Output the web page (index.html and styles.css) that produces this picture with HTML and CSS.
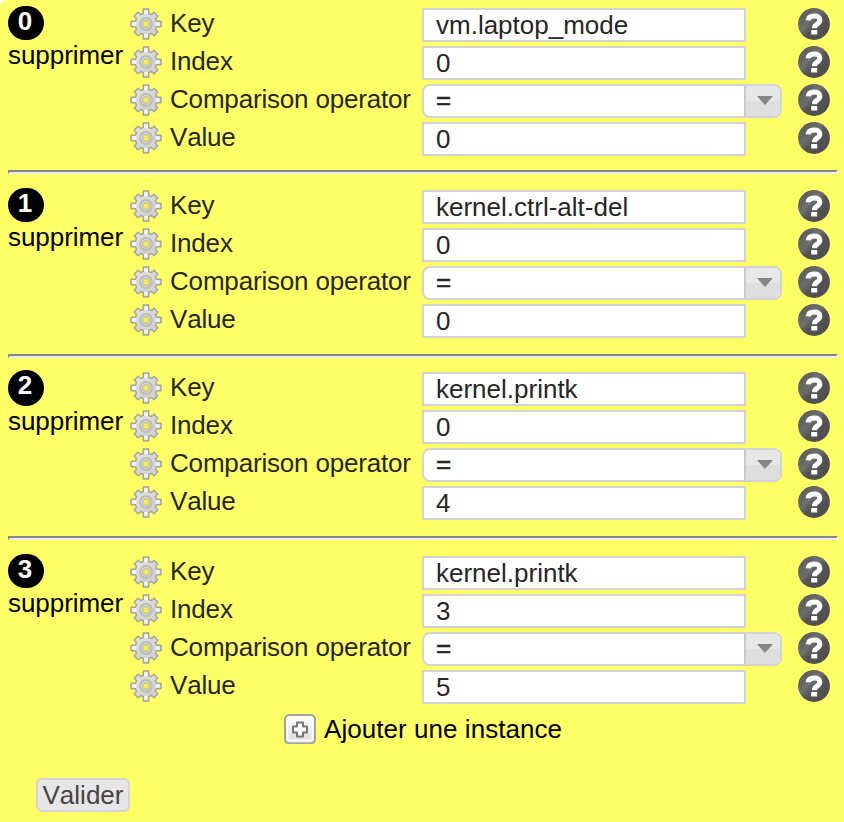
FILE: index.html
```
<!DOCTYPE html>
<html lang="fr">
<head>
<meta charset="utf-8">
<title>Instances</title>
<link rel="stylesheet" href="styles.css">
</head>
<body>
<svg class="defs" width="0" height="0" aria-hidden="true">
  <defs>
    <linearGradient id="gearFill" x1="0" y1="0" x2="1" y2="1"><stop offset="0" stop-color="#e6e6e6"/><stop offset="1" stop-color="#cacaca"/></linearGradient>
    <linearGradient id="helpFill" x1="0" y1="0" x2="1" y2="1"><stop offset="0" stop-color="#555"/><stop offset=".4" stop-color="#6e6e6e"/><stop offset=".55" stop-color="#545454"/><stop offset="1" stop-color="#4c4c4c"/></linearGradient>
    <linearGradient id="addFill" x1="0" y1="0" x2="0" y2="1"><stop offset="0" stop-color="#fff"/><stop offset="1" stop-color="#dedede"/></linearGradient>
  </defs>
  <symbol id="gear" viewBox="0 0 32 32">
    <path fill="url(#gearFill)" stroke="#a5a5a0" stroke-width="1.500" stroke-linejoin="round" d="M13.300 1h5.400v4.500l2.800 1L24 4.300 27.700 8 25.500 10.500l1 2.800H31v5.400h-4.500l-1 2.800L27.700 24 24 27.700l-2.500-2.200-2.800 1V31h-5.400v-4.500l-2.800-1L8 27.700 4.300 24l2.200-2.500-1-2.800H1v-5.400h4.500l1-2.800L4.300 8 8 4.300l2.500 2.200 2.800-1z"/>
    <path d="M14.300 2.500h3.400v3.500h-3.400zM2.500 14.300H6v3.400H2.500zM26 14.300h3.500v3.400H26zM14.300 26h3.400v3.500h-3.400z" fill="#f6f6f6"/>
    <circle cx="16" cy="16" r="6" fill="none" stroke="#bbb" stroke-width="2"/>
    <circle cx="16" cy="16" r="3.400" fill="#f4ed50" stroke="#b5b2a0" stroke-width="1"/>
  </symbol>
  <symbol id="help" viewBox="0 0 32 32">
    <circle cx="16" cy="16" r="15.900" fill="url(#helpFill)"/>
    <path d="M10.200 12.400C10.500 8.800 13 8 16 8c3.700 0 5.800 1.400 5.800 4 0 2.600-1.800 3.400-3.400 4.600-1.500 1-1.900 1.700-1.900 3.600" fill="none" stroke="#fff" stroke-width="5.200"/>
    <path d="M13.200 22h6v4.500h-6z" fill="#fff"/>
  </symbol>
</svg>
<main class="panel" id="panel"></main>
<div class="add"><svg width="32" height="30" viewBox="0 0 32 30"><rect x="1" y="1" width="30" height="28.500" rx="4.500" fill="url(#addFill)" stroke="#a2a2a2" stroke-width="2"/><rect x="3.500" y="3.500" width="25" height="23" rx="2" fill="none" stroke="#fff" stroke-width="1.500"/><path d="M13 8.500h6v4h4v6h-4v4h-6v-4H9v-6h4z" fill="#fff" stroke="#777" stroke-width="2" stroke-linejoin="round"/></svg><span class="add-text">Ajouter une instance</span></div>
<button class="submit" type="button">Valider</button>
<script src="script.js"></script>
</body>
</html>
```
FILE: styles.css
```
html {
  background: #fff;
}

body {
  box-sizing: border-box;
  height: 822px;
  margin: 0;
  overflow: hidden;
  border-top-left-radius: 7px;
  background: #ff6;
  color: #000;
  font: 26px/30px "Liberation Sans", Arial, sans-serif;
  font-kerning: none;
}

.defs {
  display: block;
}

.instance {
  display: grid;
  grid-template-columns: 122px 1fr;
  box-sizing: border-box;
  height: 180px;
  padding: 16px 14px 0 8px;
}

.instance-0 {
  height: 170px;
  padding-top: 8px;
}

.instance-2 {
  height: 178px;
  padding-top: 14px;
}

.instance-3 {
  height: 174px;
}

.side {
  margin-top: -2px;
}

.badge {
  width: 36px;
  height: 34px;
  border-radius: 17px;
  background: #000;
  color: #fff;
  font: bold 26px/30px "Liberation Sans", Arial, sans-serif;
  text-indent: -2px;
  text-align: center;
}

.instance-2 .badge {
  height: 36px;
  border-radius: 18px;
}

.remove {
  letter-spacing: -0.05px;
}

.fields {
  display: grid;
  grid-auto-rows: 38px;
}

.row {
  display: grid;
  grid-template-columns: 40px 252px 376px 32px;
  align-items: start;
  height: 34px;
  color: #262626;
}

.icon {
  display: block;
  width: 32px;
  height: 32px;
}

.label {
  letter-spacing: -0.18px;
}

.input,
.select {
  box-sizing: border-box;
  width: 324px;
  height: 34px;
  padding-left: 12px;
  border: 2px solid #d3d3d3;
  background: #fff;
  line-height: 30px;
}

.select {
  display: flex;
  justify-content: space-between;
  width: 360px;
  overflow: hidden;
  border-radius: 8px;
  line-height: 28px;
}

.operator {
  -webkit-text-stroke: 0.5px #262626;
}

.arrow {
  display: flex;
  justify-content: center;
  width: 36px;
  box-sizing: border-box;
  border-left: 2px solid #c9c9c9;
  background: linear-gradient(#e7e7e7 50%, #dedede 50%);
}

.arrow svg {
  margin: 10px 0 0 3px;
}

.rule {
  width: 830px;
  height: 4px;
  box-sizing: border-box;
  margin: 0 0 0 8px;
  border: 2px solid;
  border-color: #888 #eee #eee #888;
}

.add {
  display: flex;
  height: 30px;
  padding-left: 284px;
}

.add-text {
  margin-left: 8px;
  letter-spacing: 0.05px;
}

.submit {
  display: block;
  box-sizing: border-box;
  width: 94px;
  height: 34px;
  margin: 34px 0 0 36px;
  padding: 0;
  border: 2px solid #d3d3d3;
  border-radius: 6px;
  background: #e6e6e6;
  color: #444;
  font: 26px/30px "Liberation Sans", Arial, sans-serif;
  font-kerning: none;
}
```
FILE: script.js
```
const instances = [
  ["vm.laptop_mode", "0", "=", "0"],
  ["kernel.ctrl-alt-del", "0", "=", "0"],
  ["kernel.printk", "0", "=", "4"],
  ["kernel.printk", "3", "=", "5"]
];
const labels = ["Key", "Index", "Comparison operator", "Value"];
const icon = (name) => `<svg class="icon"><use href="#${name}"/></svg>`;
const field = (value, index) => index === 2
  ? `<div class="select"><span class="operator">${value}</span><span class="arrow"><svg width="16" height="9"><path d="M0 0h16L8 9z" fill="#858585"/></svg></span></div>`
  : `<div class="input">${value}</div>`;

document.getElementById("panel").innerHTML = instances.map((values, n) => `
  <section class="instance instance-${n}">
    <div class="side"><div class="badge">${n}</div><div class="remove">supprimer</div></div>
    <div class="fields">${values.map((value, i) => `
      <div class="row">${icon("gear")}<span class="label">${labels[i]}</span>${field(value, i)}${icon("help")}</div>`).join("")}
    </div>
  </section>`).join('<hr class="rule">');
```
